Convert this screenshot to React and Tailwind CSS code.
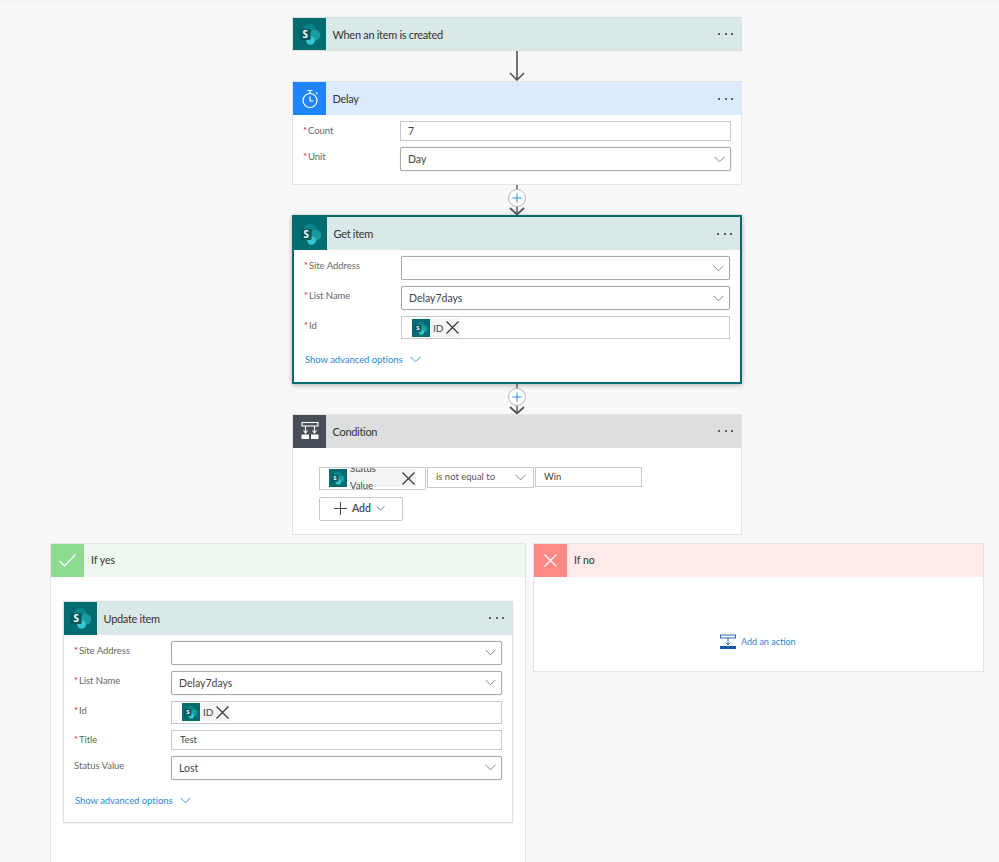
import React from 'react';

const FONT = 'font-["Lato","Open_Sans",sans-serif]';

const SharePointIcon = ({ size = 26 }) => (
  <svg width={size} height={size} viewBox="0 0 24 24">
    <circle cx="11.5" cy="8.5" r="6" fill="#0b8286" />
    <circle cx="16.5" cy="13" r="5" fill="#1a9ba1" />
    <circle cx="12.5" cy="18" r="4" fill="#37c6d0" />
    <rect x="2.5" y="7.5" width="10" height="10" rx="1" fill="#04595c" />
    <text x="7.5" y="15.5" textAnchor="middle" fontSize="9" fontWeight="700" fill="#fff" fontFamily="Open Sans, sans-serif">S</text>
  </svg>
);

const DelayIcon = () => (
  <svg width="18" height="20" viewBox="0 0 18 20" fill="none" stroke="#fff" strokeWidth="1.2">
    <circle cx="9" cy="11.5" r="7" />
    <path d="M6.5 1.5h5M9 1.5v3M9 7.5v4.5h3.5M15 3.5l1.5 1.5" />
  </svg>
);

const ConditionIcon = () => (
  <svg width="20" height="20" viewBox="0 0 20 20" fill="none" stroke="#fff" strokeWidth="1.1">
    <rect x="2" y="1.5" width="16" height="3.5" />
    <path d="M5.5 5v7M14.5 5v7M3.5 9.5l2 2.5 2-2.5M12.5 9.5l2 2.5 2-2.5" />
    <rect x="1.5" y="13.5" width="7.5" height="4.5" fill="#fff" stroke="none" />
    <rect x="11" y="13.5" width="7.5" height="4.5" fill="#fff" stroke="none" />
  </svg>
);

const Chevron = ({ className = 'text-[#777]', size = 11 }) => (
  <svg width={size} height={Math.round(size * 0.6)} viewBox="0 0 11 6.5" fill="none" stroke="currentColor" strokeWidth="0.9" className={className}>
    <path d="M.5.5l5 5 5-5" />
  </svg>
);

const Cross = ({ size = 13, color = '#333', width = 1.1 }) => (
  <svg width={size} height={size} viewBox="0 0 13 13" fill="none" stroke={color} strokeWidth={width}>
    <path d="M.5.5l12 12M12.5.5l-12 12" />
  </svg>
);

const Dots = () => (
  <div className="flex gap-[4.5px]">
    <span className="w-[2px] h-[2px] rounded-full bg-[#333]" />
    <span className="w-[2px] h-[2px] rounded-full bg-[#333]" />
    <span className="w-[2px] h-[2px] rounded-full bg-[#333]" />
  </div>
);

const Arrow = () => (
  <svg width="30" height="30" viewBox="0 0 30 30" fill="none" stroke="#555" strokeWidth="1.6" className="block">
    <path d="M15 0v29M8 22l7 7 7-7" />
  </svg>
);

const PlusArrow = () => (
  <svg width="30" height="30" viewBox="0 0 30 30" fill="none" className="block">
    <path d="M15 0v5M15 20v9" stroke="#555" strokeWidth="1.4" />
    <circle cx="15" cy="13" r="8.5" fill="#fff" stroke="#b5b5b5" strokeWidth="1" />
    <path d="M15 8.5v9M10.5 13h9" stroke="#2b88d8" strokeWidth="1" />
    <path d="M8 23l7 6.5 7-6.5" stroke="#555" strokeWidth="1.8" />
  </svg>
);

const CardHeader = ({ title, iconBg, headerBg, icon, height = 'h-[33px]' }) => (
  <div className={`flex items-center ${height} ${headerBg}`}>
    <div className={`flex items-center justify-center h-full shrink-0 w-[33px] ${iconBg}`}>{icon}</div>
    <div className="flex-1 pl-[6.5px] text-[11px] leading-none tracking-[-0.3px] text-[#333]">{title}</div>
    <div className="pr-[8px]"><Dots /></div>
  </div>
);

const Label = ({ text, required = true }) => (
  <div className="w-[97px] shrink-0 pt-[3px] text-[9.5px] leading-[14px] tracking-[-0.05px] text-[#666]">
    {required && <span className="text-[#e3242b] mr-[1px]">*</span>}
    {text}
  </div>
);

const Select = ({ value }) => (
  <div className="flex-1 h-[24px] flex items-center justify-between pl-[7px] pr-[5px] bg-white border border-[#a9a9a9] rounded-[2px] shadow-[0_0_1px_#bbb] text-[10.5px] text-[#444]">
    <span className="pt-[2px]">{value}</span>
    <Chevron />
  </div>
);

const TextBox = ({ value }) => (
  <div className="flex-1 h-[20px] flex items-center pl-[8px] pt-[1px] bg-white border border-[#c8c8c8] text-[9.5px] text-[#444]">{value}</div>
);

const IdToken = () => (
  <div className="flex-1 h-[23px] flex items-center pl-[10px] bg-white border border-[#c8c8c8]">
    <div className="w-[18px] h-[18px] bg-[#036c70] flex items-center justify-center"><SharePointIcon size={16} /></div>
    <div className="h-[18px] ml-px w-[29px] bg-[#f4f4f4] flex items-center justify-between pl-[2px] pr-[1px] text-[10px] text-[#444]">
      <span className="pt-[1px]">ID</span>
      <Cross />
    </div>
  </div>
);

const AdvancedLink = ({ className = '' }) => (
  <div className={`flex items-center gap-[7px] text-[9.5px] tracking-[-0.05px] leading-none text-[#2b88d8] ${className}`}>
    <span>Show advanced options</span>
    <Chevron className="text-[#2b88d8]" />
  </div>
);

const SpFields = ({ children }) => <div className="flex flex-col gap-[6px]">{children}</div>;

export default function App() {
  return (
    <div className={`w-[999px] h-[862px] overflow-hidden bg-[#f8f8f8] ${FONT}`}>
      <div className="h-[4px] bg-[#f4f4f4]" />
      <div className="flex flex-col items-center pt-[13px] pl-[35px]">
        {/* trigger */}
        <div className="w-[450px] border border-[#d5dfdf]">
          <CardHeader title="When an item is created" height="h-[32px]" iconBg="bg-[#036c70]" headerBg="bg-[#d9e8e8]" icon={<SharePointIcon />} />
        </div>
        <Arrow />

        {/* delay */}
        <div className="w-[450px] bg-white border border-[#e3e3e3]">
          <CardHeader title="Delay" iconBg="bg-[#1f85ff]" headerBg="bg-[#dcebfd]" icon={<DelayIcon />} />
          <div className="px-[10px] pt-[6px] pb-[13px]">
            <div className="flex mb-[6px]">
              <Label text="Count" />
              <TextBox value={<span className="text-[10.5px] -ml-[1px]">7</span>} />
            </div>
            <div className="flex">
              <Label text="Unit" />
              <Select value="Day" />
            </div>
          </div>
        </div>
        <PlusArrow />

        {/* get item */}
        <div className="w-[450px] bg-white border-2 border-[#036c70] shadow-[0_1px_5px_rgba(0,0,0,0.3)]">
          <CardHeader title="Get item" iconBg="bg-[#036c70]" headerBg="bg-[#d9e8e8]" icon={<SharePointIcon />} />
          <div className="pl-[10px] pr-[10px] pt-[6px]">
            <SpFields>
              <div className="flex"><Label text="Site Address" /><Select value="" /></div>
              <div className="flex"><Label text="List Name" /><Select value="Delay7days" /></div>
              <div className="flex"><Label text="Id" /><IdToken /></div>
            </SpFields>
            <AdvancedLink className="mt-[16px] ml-[1px] pb-[17px]" />
          </div>
        </div>
        <PlusArrow />

        {/* condition */}
        <div className="w-[450px] h-[121px] bg-white border border-[#e3e3e3]">
          <CardHeader title="Condition" iconBg="bg-[#484f58]" headerBg="bg-[#dcdee0]" icon={<ConditionIcon />} />
          <div className="pl-[26px] pt-[19px]">
            <div className="flex items-start gap-[1px]">
              <div className="w-[107px] h-[23px] border border-[#c8c8c8] flex items-center pl-[9px] overflow-hidden">
                <div className="w-[18px] h-[18px] shrink-0 bg-[#036c70] flex items-center justify-center"><SharePointIcon size={16} /></div>
                <div className="w-[69px] h-[18px] bg-[#f4f4f4] flex items-center justify-between pr-[1px] pl-[3px] text-[9.5px] leading-[17px] text-[#444]">
                  <span className="w-[30px] -mt-[2px]">Status Value</span>
                  <Cross />
                </div>
              </div>
              <div className="w-[107px] h-[21px] border border-[#c8c8c8] flex items-center justify-between pl-[8px] pr-[7px] text-[9.5px] text-[#555]">
                <span className="pt-[1px]">is not equal to</span>
                <Chevron />
              </div>
              <div className="w-[107px] h-[20px] border border-[#c8c8c8] flex items-center pl-[8px] pt-[1px] text-[9.5px] text-[#444]">Win</div>
            </div>
            <div className="mt-[7px] w-[84px] h-[24px] border border-[#c8c8c8] rounded-[2px] flex items-center pl-[14px] gap-[5px] text-[10.5px] font-semibold text-[#444]">
              <svg width="13" height="13" viewBox="0 0 13 13" stroke="#444" strokeWidth="1" fill="none"><path d="M6.5 0v13M0 6.5h13" /></svg>
              <span>Add</span>
              <Chevron size={9} className="text-[#444]" />
            </div>
          </div>
        </div>
      </div>

      {/* branches */}
      <div className="flex items-start gap-[7px] pl-[50px] mt-[8px]">
        <div className="w-[476px] h-[330px] bg-white border border-[#e3e3e3]">
          <div className="flex items-center h-[33px] bg-[#ecf7ee]">
            <div className="w-[33px] h-full bg-[#8cdb8f] flex items-center justify-center">
              <svg width="17" height="13" viewBox="0 0 17 13" fill="none" stroke="#fff" strokeWidth="1.2"><path d="M.5 7l5 5L16.5.5" /></svg>
            </div>
            <div className="pl-[7px] pt-[1px] text-[10.5px] text-[#333]">If yes</div>
          </div>
          <div className="ml-[12px] mt-[24px] w-[450px] bg-white border border-[#dedede] shadow-[0_0_1px_#ddd]">
            <CardHeader title="Update item" iconBg="bg-[#036c70]" headerBg="bg-[#d9e8e8]" icon={<SharePointIcon />} />
            <div className="px-[10px] pt-[6px]">
              <SpFields>
                <div className="flex"><Label text="Site Address" /><Select value="" /></div>
                <div className="flex"><Label text="List Name" /><Select value="Delay7days" /></div>
                <div className="flex"><Label text="Id" /><IdToken /></div>
                <div className="flex"><Label text="Title" /><TextBox value="Test" /></div>
                <div className="flex"><Label text="Status Value" required={false} /><Select value="Lost" /></div>
              </SpFields>
              <AdvancedLink className="mt-[16px] ml-[1px] pb-[17px]" />
            </div>
          </div>
        </div>

        <div className="w-[451px] h-[129px] bg-white border border-[#e3e3e3]">
          <div className="flex items-center h-[33px] bg-[#ffeaea]">
            <div className="w-[33px] h-full bg-[#ff8a85] flex items-center justify-center"><Cross size={13} color="#fff" /></div>
            <div className="pl-[7px] pt-[1px] text-[10.5px] text-[#333]">If no</div>
          </div>
          <div className="mt-[57px] ml-[186px] flex items-center gap-[5px] text-[9px] text-[#2b88d8]">
            <svg width="16" height="16" viewBox="0 0 16 16" fill="none">
              <rect x=".5" y="1" width="15" height="3" stroke="#2b6cb8" strokeWidth="1" fill="#fff" />
              <path d="M8 4v7M5.5 8.5L8 11l2.5-2.5" stroke="#2b6cb8" strokeWidth="1" />
              <rect x="0" y="12" width="16" height="3" fill="#0f5cad" />
            </svg>
            <span className="pt-[1px]">Add an action</span>
          </div>
        </div>
      </div>
    </div>
  );
}
